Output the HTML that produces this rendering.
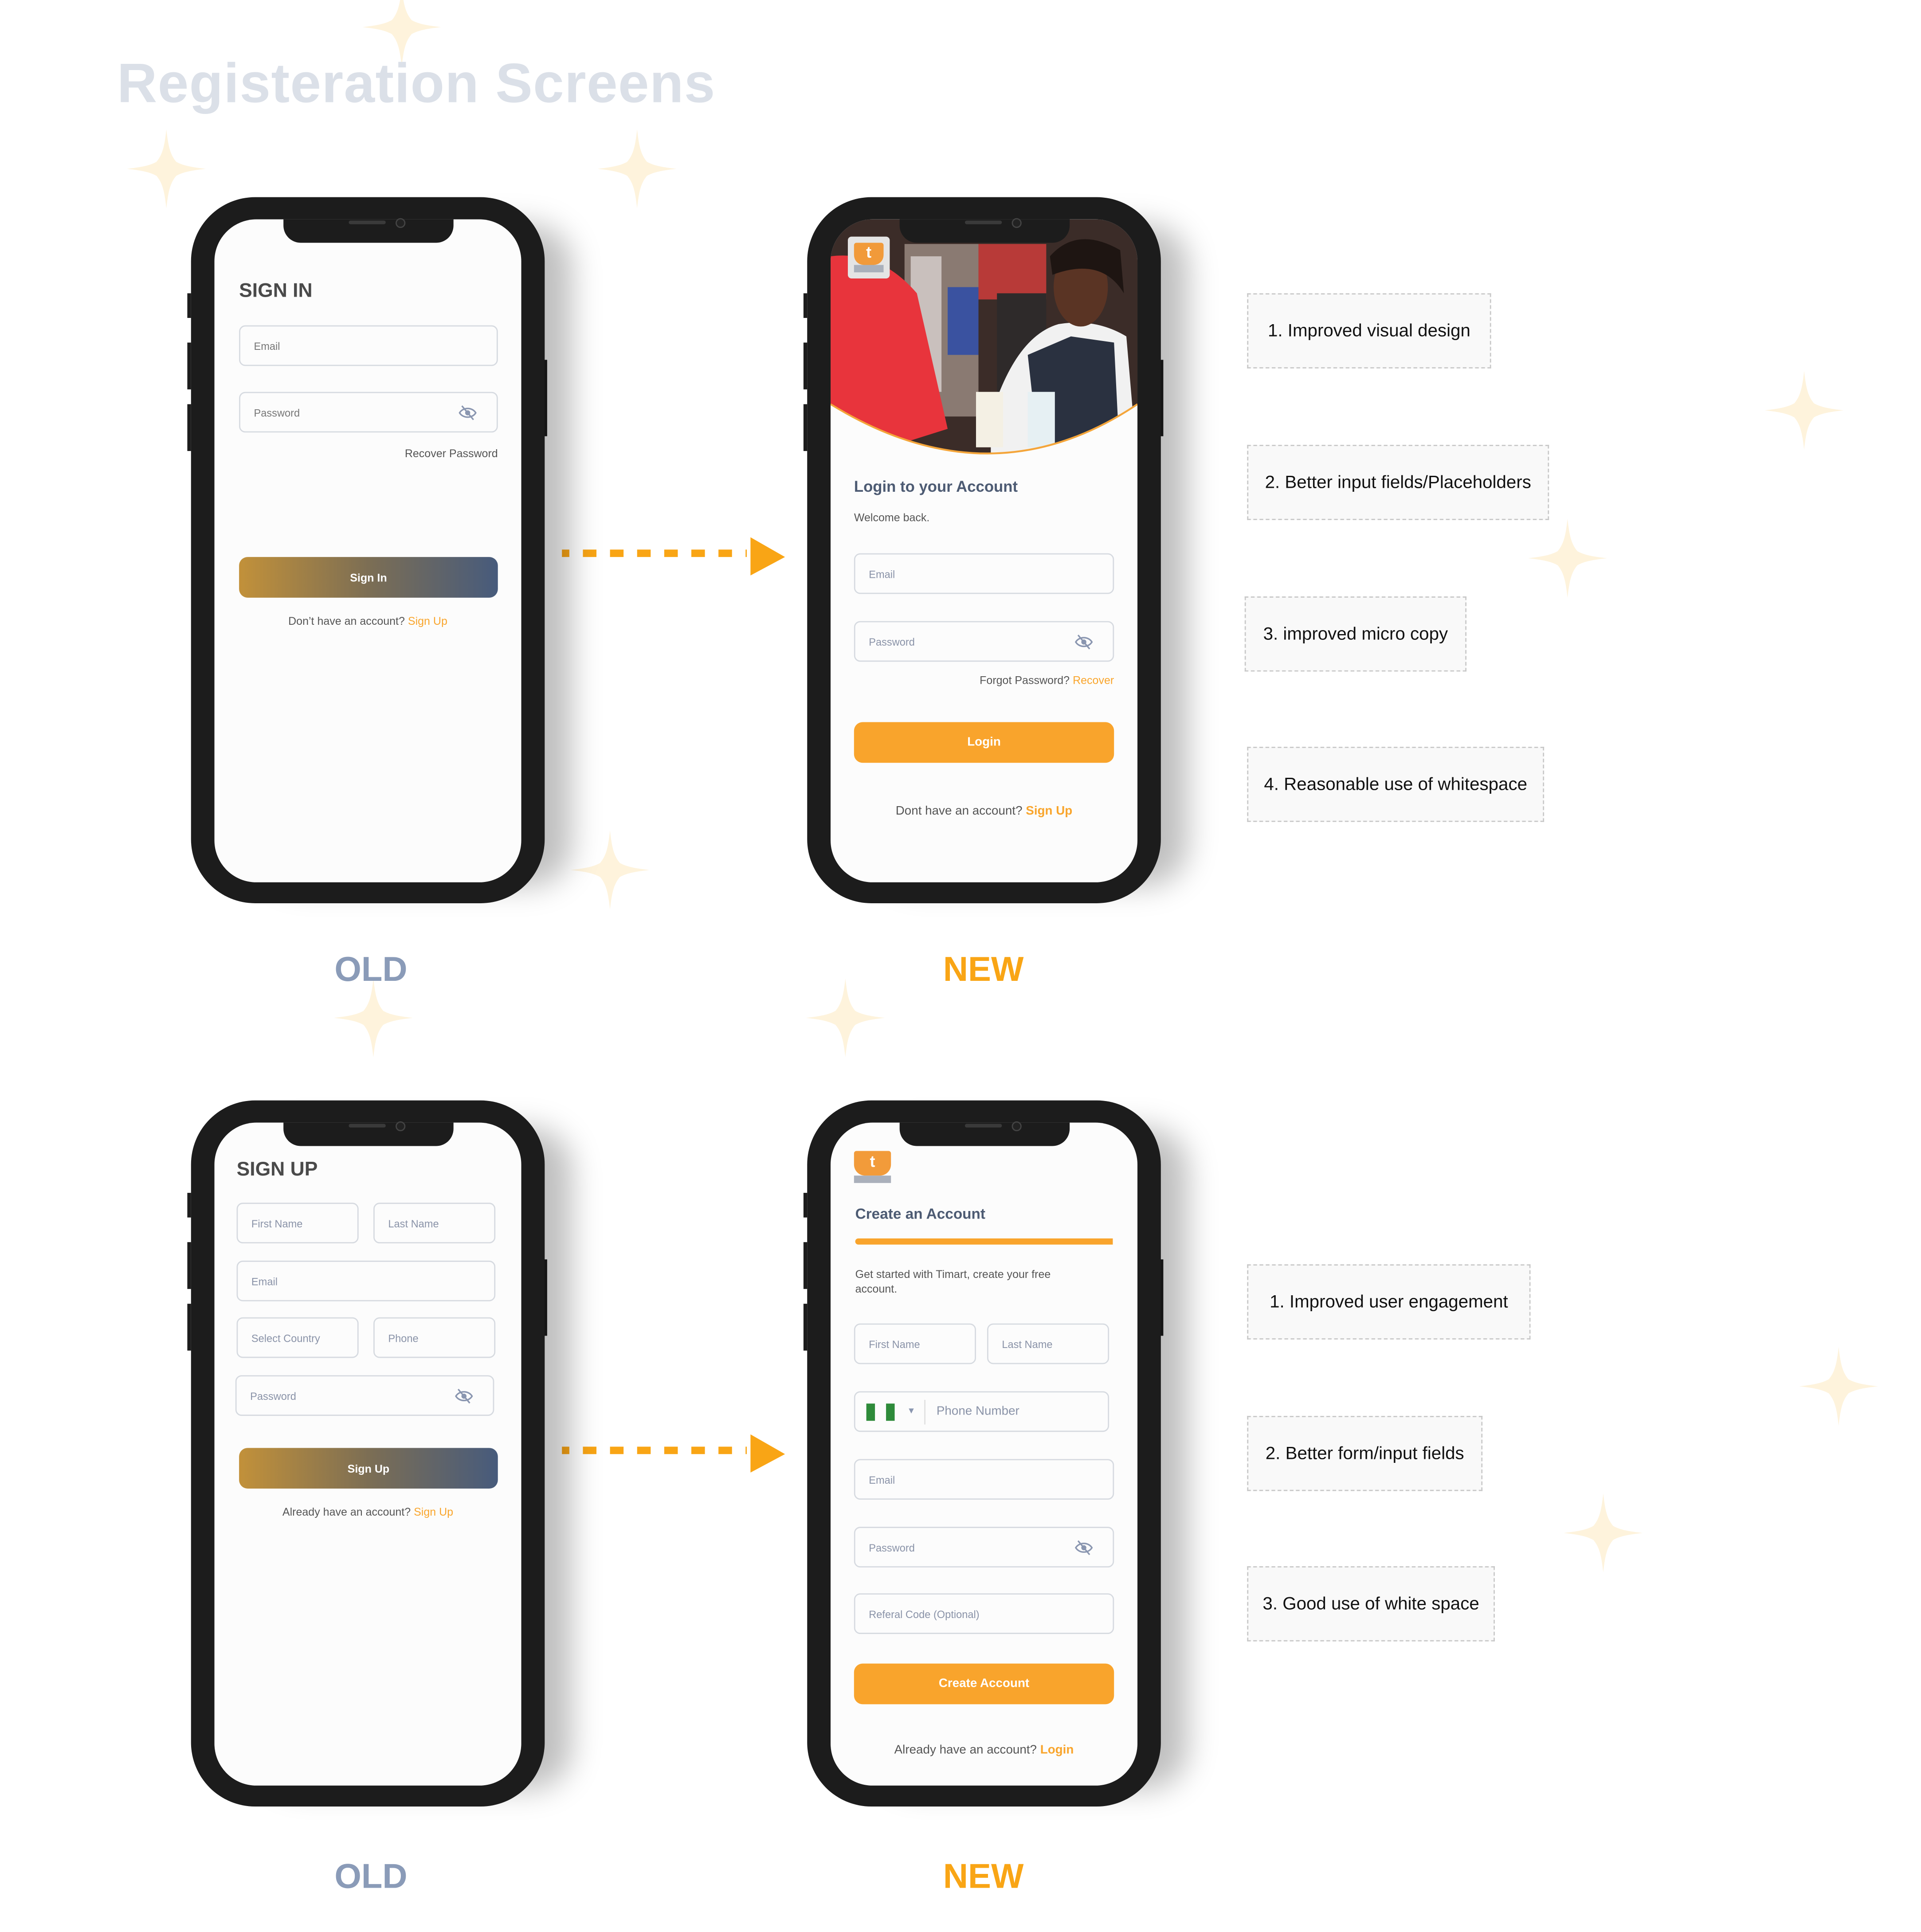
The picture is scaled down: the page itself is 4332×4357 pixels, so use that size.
<!DOCTYPE html>
<html><head><meta charset="utf-8"><style>
html,body{margin:0;padding:0;background:#fff;}
body{width:4332px;height:4353px;overflow:hidden;position:relative;font-family:"Liberation Sans",sans-serif;}
#w{position:absolute;left:0;top:0;width:1560px;height:1568px;transform:scale(2.779);transform-origin:0 0;}
.a{position:absolute;}
.phone{position:absolute;width:287px;height:573px;background:#1c1c1c;border-radius:52px;box-shadow:40px 4px 24px -18px rgba(0,0,0,.25);}
.scr{position:absolute;left:19px;top:18px;width:249px;height:538px;background:#fcfcfc;border-radius:34px;overflow:hidden;}
.notch{position:absolute;left:56px;top:0;width:138px;height:19px;background:#1c1c1c;border-radius:0 0 14px 14px;}
.spk{position:absolute;left:128px;top:19px;width:30px;height:3px;border-radius:2px;background:#3a3a3a;}
.cam{position:absolute;left:166px;top:17px;width:6px;height:6px;border-radius:50%;border:1px solid #444;background:#222;}
.btn{position:absolute;width:3px;background:#1c1c1c;}
.in{position:absolute;border:1px solid #d6dae0;border-radius:5px;background:#fcfcfc;box-sizing:border-box;font-size:8.5px;color:#8a93a8;padding-left:11px;display:flex;align-items:center;}
.ol .in{color:#777;}
.eye{position:absolute;right:16px;top:50%;margin-top:-7px;}
.box{position:absolute;border:1px dashed #c8c8c8;background:#f9f9f9;box-sizing:border-box;font-size:14.5px;color:#111;display:flex;align-items:center;justify-content:center;white-space:nowrap;}
.grad{position:absolute;border-radius:7px;background:linear-gradient(90deg,#c2913a,#7c6e54 50%,#475b7c);color:#fff;font-size:9px;font-weight:bold;display:flex;align-items:center;justify-content:center;}
.org{position:absolute;border-radius:7px;background:#f9a42c;color:#fff;font-size:10px;font-weight:bold;display:flex;align-items:center;justify-content:center;}
.star{position:absolute;width:64px;height:64px;}
</style></head><body><div id="w">

<svg width="0" height="0" style="position:absolute"><defs><path id="st" d="M32 0 C34 18 36 24 46 32 C36 40 34 46 32 64 C30 46 28 40 18 32 C28 24 30 18 32 0Z M0 32 C18 30 24 28 32 20 C40 28 46 30 64 32 C46 34 40 36 32 44 C24 36 18 34 0 32Z"/></defs></svg>

<svg class="star" style="left:294px;top:-10px" viewBox="0 0 64 64"><use href="#st" fill="#fef3dc"/></svg>
<svg class="star" style="left:103px;top:105px" viewBox="0 0 64 64"><use href="#st" fill="#fef3dc"/></svg>
<svg class="star" style="left:485px;top:105px" viewBox="0 0 64 64"><use href="#st" fill="#fef3dc"/></svg>
<svg class="star" style="left:1432px;top:301px" viewBox="0 0 64 64"><use href="#st" fill="#fef3dc"/></svg>
<svg class="star" style="left:1240px;top:421px" viewBox="0 0 64 64"><use href="#st" fill="#fef3dc"/></svg>
<svg class="star" style="left:463px;top:674px" viewBox="0 0 64 64"><use href="#st" fill="#fef3dc"/></svg>
<svg class="star" style="left:271px;top:794px" viewBox="0 0 64 64"><use href="#st" fill="#fef3dc"/></svg>
<svg class="star" style="left:654px;top:794px" viewBox="0 0 64 64"><use href="#st" fill="#fef3dc"/></svg>
<svg class="star" style="left:1460px;top:1093px" viewBox="0 0 64 64"><use href="#st" fill="#fef3dc"/></svg>
<svg class="star" style="left:1269px;top:1212px" viewBox="0 0 64 64"><use href="#st" fill="#fef3dc"/></svg>

<div class="a" style="left:95px;top:42px;font-size:45px;font-weight:bold;color:#dbe0e8;letter-spacing:0.5px;white-space:nowrap;">Registeration Screens</div>

<svg class="a" style="left:450px;top:430px" width="200" height="45"><line x1="6" y1="19" x2="156" y2="19" stroke="#f9a515" stroke-width="6" stroke-dasharray="11 11" stroke-dashoffset="5"/><polygon points="159,6 187,22 159,37" fill="#f9a515"/></svg>
<svg class="a" style="left:450px;top:1158px" width="200" height="45"><line x1="6" y1="19" x2="156" y2="19" stroke="#f9a515" stroke-width="6" stroke-dasharray="11 11" stroke-dashoffset="5"/><polygon points="159,6 187,22 159,37" fill="#f9a515"/></svg>

<div class="box" style="left:1012px;top:238px;width:198px;height:61px;">1. Improved visual design</div>
<div class="box" style="left:1012px;top:361px;width:245px;height:61px;">2. Better input fields/Placeholders</div>
<div class="box" style="left:1010px;top:484px;width:180px;height:61px;">3. improved micro copy</div>
<div class="box" style="left:1012px;top:606px;width:241px;height:61px;">4. Reasonable use of whitespace</div>
<div class="box" style="left:1012px;top:1026px;width:230px;height:61px;">1. Improved user engagement</div>
<div class="box" style="left:1012px;top:1149px;width:191px;height:61px;">2. Better form/input fields</div>
<div class="box" style="left:1012px;top:1271px;width:201px;height:61px;">3. Good use of white space</div>

<div class="a" style="left:231px;top:771px;width:140px;text-align:center;font-size:28px;font-weight:bold;color:#8a9bb8;">OLD</div>
<div class="a" style="left:728px;top:771px;width:140px;text-align:center;font-size:28px;font-weight:bold;color:#f9a515;">NEW</div>
<div class="a" style="left:231px;top:1507px;width:140px;text-align:center;font-size:28px;font-weight:bold;color:#8a9bb8;">OLD</div>
<div class="a" style="left:728px;top:1507px;width:140px;text-align:center;font-size:28px;font-weight:bold;color:#f9a515;">NEW</div>

<!-- PHONE 1 -->
<div class="btn" style="left:152px;top:238px;height:20px"></div><div class="btn" style="left:152px;top:278px;height:38px"></div><div class="btn" style="left:152px;top:328px;height:38px"></div><div class="btn" style="left:441px;top:292px;height:62px"></div>
<div class="phone ol" style="left:155px;top:160px;">
 <div class="scr">
  <div class="a" style="left:20px;top:50px;font-size:16px;font-weight:bold;color:#4a4a4a;">SIGN IN</div>
  <div class="in" style="left:20px;top:86px;width:210px;height:33px;">Email</div>
  <div class="in" style="left:20px;top:140px;width:210px;height:33px;">Password<svg class="eye" width="15" height="14" viewBox="0 0 16 14"><path d="M1 7 C4 2 12 2 15 7 C12 12 4 12 1 7Z" fill="none" stroke="#8a96b0" stroke-width="1.3"/><circle cx="8" cy="7" r="2.2" fill="#8a96b0"/><line x1="3" y1="1" x2="13" y2="13" stroke="#8a96b0" stroke-width="1.3"/></svg></div>
  <div class="a" style="right:19px;top:185px;font-size:9px;color:#555;">Recover Password</div>
  <div class="grad" style="left:20px;top:274px;width:210px;height:33px;">Sign In</div>
  <div class="a" style="left:0;width:249px;top:321px;text-align:center;font-size:9px;color:#555;">Don’t have an account? <span style="color:#f9a52c">Sign Up</span></div>
 </div>
 <div class="notch" style="left:75px;top:18px"></div><div class="spk"></div><div class="cam"></div>
</div>

<!-- PHONE 2 -->
<div class="btn" style="left:652px;top:238px;height:20px"></div><div class="btn" style="left:652px;top:278px;height:38px"></div><div class="btn" style="left:652px;top:328px;height:38px"></div><div class="btn" style="left:941px;top:292px;height:62px"></div>
<div class="phone" style="left:655px;top:160px;">
 <div class="scr">
  <svg class="a" style="left:0;top:0" width="249" height="200" viewBox="0 0 249 200">
   <defs><clipPath id="cp"><path d="M0 0 H249 V150 Q130 230 0 150Z"/></clipPath></defs>
   <g clip-path="url(#cp)">
    <rect width="249" height="200" fill="#3b2c28"/>
    <rect x="60" y="20" width="60" height="140" fill="#8a7a72"/>
    <rect x="65" y="30" width="25" height="110" fill="#c9c0bd"/>
    <rect x="95" y="55" width="25" height="55" fill="#3a52a0"/>
    <rect x="120" y="20" width="55" height="45" fill="#b83a38"/>
    <rect x="135" y="60" width="40" height="100" fill="#2e2a2a"/>
    <path d="M0 30 Q40 25 70 60 L95 170 L0 200Z" fill="#e8343c"/>
    <path d="M130 160 Q150 95 185 85 Q215 80 240 95 L249 200 H130Z" fill="#f1f1f1"/>
    <path d="M160 110 L195 95 L230 100 L235 200 H170Z" fill="#2a3140"/>
    <ellipse cx="203" cy="55" rx="22" ry="32" fill="#5a3424"/>
    <path d="M178 30 Q200 5 235 25 L238 60 Q220 30 180 45Z" fill="#1e1512"/>
    <rect x="118" y="140" width="22" height="45" fill="#f4f0e4"/>
    <rect x="160" y="140" width="22" height="45" fill="#e6f0f3"/>
   </g>
   <path d="M0 150 Q130 230 249 150" fill="none" stroke="#f4a53a" stroke-width="1.5"/>
  </svg>
  <div class="a" style="left:14px;top:14px;width:34px;height:34px;background:#e4e4e4;border-radius:3px;"></div>
  <div class="a" style="left:19px;top:19px;width:24px;height:18px;background:#f19a3a;border-radius:2px 2px 8px 8px;color:#fff;font-weight:bold;font-size:13px;text-align:center;line-height:16px;">t</div>
  <div class="a" style="left:19px;top:37px;width:24px;height:6px;background:#a9b0bb;"></div>
  <div class="a" style="left:19px;top:210px;font-size:12.5px;font-weight:bold;color:#4d5b73;">Login to your Account</div>
  <div class="a" style="left:19px;top:237px;font-size:9px;color:#555;">Welcome back.</div>
  <div class="in" style="left:19px;top:271px;width:211px;height:33px;">Email</div>
  <div class="in" style="left:19px;top:326px;width:211px;height:33px;">Password<svg class="eye" width="15" height="14" viewBox="0 0 16 14"><path d="M1 7 C4 2 12 2 15 7 C12 12 4 12 1 7Z" fill="none" stroke="#8a96b0" stroke-width="1.3"/><circle cx="8" cy="7" r="2.2" fill="#8a96b0"/><line x1="3" y1="1" x2="13" y2="13" stroke="#8a96b0" stroke-width="1.3"/></svg></div>
  <div class="a" style="right:19px;top:369px;font-size:9px;color:#555;">Forgot Password? <span style="color:#f9a52c">Recover</span></div>
  <div class="org" style="left:19px;top:408px;width:211px;height:33px;">Login</div>
  <div class="a" style="left:0;width:249px;top:475px;text-align:center;font-size:10px;color:#555;">Dont have an account? <b style="color:#f9a52c">Sign Up</b></div>
 </div>
 <div class="notch" style="left:75px;top:18px"></div><div class="spk"></div><div class="cam"></div>
</div>

<!-- PHONE 3 -->
<div class="btn" style="left:152px;top:968px;height:20px"></div><div class="btn" style="left:152px;top:1008px;height:38px"></div><div class="btn" style="left:152px;top:1058px;height:38px"></div><div class="btn" style="left:441px;top:1022px;height:62px"></div>
<div class="phone" style="left:155px;top:893px;">
 <div class="scr">
  <div class="a" style="left:18px;top:30px;font-size:16px;font-weight:bold;color:#4a4a4a;">SIGN UP</div>
  <div class="in" style="left:18px;top:65px;width:99px;height:33px;">First Name</div>
  <div class="in" style="left:129px;top:65px;width:99px;height:33px;">Last Name</div>
  <div class="in" style="left:18px;top:112px;width:210px;height:33px;">Email</div>
  <div class="in" style="left:18px;top:158px;width:99px;height:33px;">Select Country</div>
  <div class="in" style="left:129px;top:158px;width:99px;height:33px;">Phone</div>
  <div class="in" style="left:17px;top:205px;width:210px;height:33px;">Password<svg class="eye" width="15" height="14" viewBox="0 0 16 14"><path d="M1 7 C4 2 12 2 15 7 C12 12 4 12 1 7Z" fill="none" stroke="#8a96b0" stroke-width="1.3"/><circle cx="8" cy="7" r="2.2" fill="#8a96b0"/><line x1="3" y1="1" x2="13" y2="13" stroke="#8a96b0" stroke-width="1.3"/></svg></div>
  <div class="grad" style="left:20px;top:264px;width:210px;height:33px;">Sign Up</div>
  <div class="a" style="left:0;width:249px;top:311px;text-align:center;font-size:9px;color:#555;">Already have an account? <span style="color:#f9a52c">Sign Up</span></div>
 </div>
 <div class="notch" style="left:75px;top:18px"></div><div class="spk"></div><div class="cam"></div>
</div>

<!-- PHONE 4 -->
<div class="btn" style="left:652px;top:968px;height:20px"></div><div class="btn" style="left:652px;top:1008px;height:38px"></div><div class="btn" style="left:652px;top:1058px;height:38px"></div><div class="btn" style="left:941px;top:1022px;height:62px"></div>
<div class="phone" style="left:655px;top:893px;">
 <div class="scr">
  <div class="a" style="left:19px;top:23px;width:30px;height:20px;background:#f29b3a;border-radius:2px 2px 9px 9px;color:#fff;font-weight:bold;font-size:13px;text-align:center;line-height:18px;">t</div>
  <div class="a" style="left:19px;top:43px;width:30px;height:6px;background:#aab0bb;"></div>
  <div class="a" style="left:20px;top:67px;font-size:12px;font-weight:bold;color:#4d5b73;">Create an Account</div>
  <div class="a" style="left:20px;top:94px;width:209px;height:5px;background:#f9a42c;border-radius:3px 0 0 3px;"></div>
  <div class="a" style="left:20px;top:117px;width:190px;font-size:9px;line-height:12px;color:#555;">Get started with Timart, create your free account.</div>
  <div class="in" style="left:19px;top:163px;width:99px;height:33px;">First Name</div>
  <div class="in" style="left:127px;top:163px;width:99px;height:33px;">Last Name</div>
  <div class="in" style="left:19px;top:218px;width:207px;height:33px;padding-left:9px;font-size:10px;"><span style="display:inline-block;width:7px;height:14px;background:#2e8b3a;margin-right:9px;"></span><span style="display:inline-block;width:7px;height:14px;background:#2e8b3a;margin-right:10px;"></span><span style="font-size:7px;color:#8a96b0;margin-right:7px;">▼</span><span style="display:inline-block;width:1px;height:20px;background:#e0e0e0;margin-right:9px;"></span>Phone Number</div>
  <div class="in" style="left:19px;top:273px;width:211px;height:33px;">Email</div>
  <div class="in" style="left:19px;top:328px;width:211px;height:33px;">Password<svg class="eye" width="15" height="14" viewBox="0 0 16 14"><path d="M1 7 C4 2 12 2 15 7 C12 12 4 12 1 7Z" fill="none" stroke="#8a96b0" stroke-width="1.3"/><circle cx="8" cy="7" r="2.2" fill="#8a96b0"/><line x1="3" y1="1" x2="13" y2="13" stroke="#8a96b0" stroke-width="1.3"/></svg></div>
  <div class="in" style="left:19px;top:382px;width:211px;height:33px;">Referal Code (Optional)</div>
  <div class="org" style="left:19px;top:439px;width:211px;height:33px;">Create Account</div>
  <div class="a" style="left:0;width:249px;top:504px;text-align:center;font-size:10px;color:#555;">Already have an account? <b style="color:#f9a52c">Login</b></div>
 </div>
 <div class="notch" style="left:75px;top:18px"></div><div class="spk"></div><div class="cam"></div>
</div>

</div></body></html>
